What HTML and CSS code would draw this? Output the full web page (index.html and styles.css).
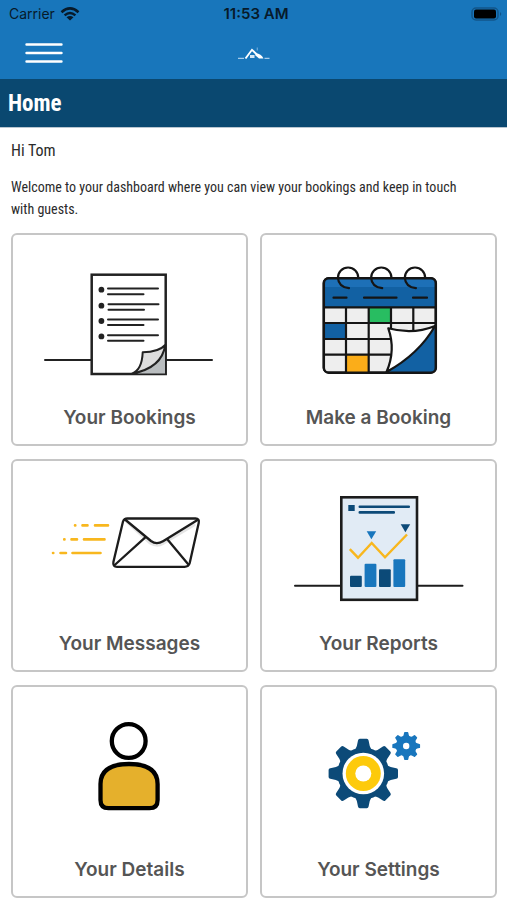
FILE: index.html
```html
<!DOCTYPE html>
<html lang="en">
<head>
<meta charset="utf-8">
<meta name="viewport" content="width=device-width, initial-scale=1">
<title>Home</title>
<link rel="stylesheet" href="styles.css">
</head>
<body>
<header class="top">
  <div class="status">
    <span class="carrier">Carrier
      <svg width="20" height="14" viewBox="0 0 20 14" fill="none" stroke="#071a2a" stroke-width="2.5" aria-hidden="true"><path d="M1.5 5.2Q10-2.4 18.500 5.200M4.600 8.400Q10 3.600 15.400 8.400"/><path d="M10 13.500L6.500 10.300Q10 7.500 13.500 10.300Z" fill="#071a2a" stroke="none"/></svg>
    </span>
    <span class="clock">11:53 AM</span>
    <svg class="battery" width="32" height="14" viewBox="0 0 32 14" aria-hidden="true"><rect x="1" y="1" width="26" height="12" rx="4" fill="none" stroke="#12568a" stroke-width="1.500"/><rect x="3" y="2.500" width="22" height="9" rx="2" fill="#000"/><path d="M29 5q2.500 2 0 4z" fill="#12568a"/></svg>
  </div>
  <nav class="nav">
    <button class="menu" type="button" aria-label="Menu"><svg width="38" height="22" viewBox="0 0 38 22" stroke="#fff" stroke-width="2.400" stroke-linecap="round" aria-hidden="true"><path d="M1.500 2.500h35M1.500 11h35M1.500 19.500h35"/></svg></button>
    <svg class="logo" width="34" height="16" viewBox="0 0 34 16" fill="none" stroke="#fff" aria-hidden="true"><path d="M8.500 13.500L15 4.800L20.500 10" stroke-width="1.900"/><path d="M19 8.500q5 0 7.500 5h-4.500l-4-3.500z" fill="#fff" stroke="none"/><rect x="13" y="10" width="4.500" height="3" fill="#d5e7f5" stroke="none"/><path d="M1 13.300h6M27.500 13.300h5" stroke="#a5cbea" stroke-width="1.200"/><path d="M20.300 2.500v3" stroke="#6aa9dc" stroke-width="1.200"/></svg>
  </nav>
</header>
<h1 class="title">Home</h1>
<main class="page">
  <p class="hi">Hi Tom</p>
  <p class="intro">Welcome to your dashboard where you can view your bookings and keep in touch with guests.</p>
  <div class="cards">
    <a class="card" href="#bookings">
      <svg class="art" viewBox="30 245 200 150" fill="none" stroke="#222" stroke-width="2" stroke-linecap="round" aria-hidden="true">
        <path d="M45 360H212"/>
        <rect x="91.700" y="274.700" width="74" height="99.300" fill="#fff" stroke-width="2.500" stroke-linejoin="miter"/>
        <path d="M165 346V373.500H137Q160 368 165 346Z" fill="#b9bdbf" stroke="none"/>
        <path d="M132 373.600Q142 370 142.700 352.300Q159 352 165.200 345Q162 368 132 373.600Z" fill="#dedede" stroke-linejoin="round"/>
        <g fill="#222" stroke="none"><circle cx="101.400" cy="289.700" r="2.900"/><circle cx="101.400" cy="305.700" r="2.900"/><circle cx="101.400" cy="321" r="2.900"/><circle cx="101.400" cy="336.400" r="2.900"/></g>
        <path d="M108 288.500h50M108 294.200h35.500M108.500 304.300h50M108.500 309.800h35.500M108 319.500h50M108 325h35.500M108 335.200h50M108 340.700h35.500"/>
      </svg>
      <span class="label">Your Bookings</span>
    </a>
    <a class="card" href="#new-booking">
      <svg class="art" viewBox="279 245 200 150" fill="none" stroke="#151515" stroke-width="2.200" stroke-linecap="round" stroke-linejoin="round" aria-hidden="true">
        <rect x="323.800" y="278.200" width="112" height="94.500" rx="5" fill="#eee"/>
        <path d="M324 307V283q0-5 5-5h102q5 0 5 5v24z" fill="#1261a3" stroke="none"/>
        <path d="M325 287v-4q0-4 4-4h102q4 0 4 4v4z" fill="#1d70b7" stroke="none"/>
        <path d="M368.700 307.300h22.300V323h-22.300z" fill="#28bd61" stroke="none"/>
        <path d="M324 323h22v16h-22z" fill="#1261a3" stroke="none"/>
        <path d="M346 354.700h22.700v18H346z" fill="#fbad19" stroke="none"/>
        <path d="M324 307.300h112M324 323h112M324 339h68M324 354.700h66M346 307.300v65.400M368.700 307.300v65.400M391 307.300v24M413.300 307.300v24"/>
        <path d="M435.800 326V368q0 4.700-5 4.700H387Z" fill="#1261a3" stroke="none"/>
        <path d="M388.300 328.300Q413 335 435 326Q419 354 386.500 372Q396 350 388.300 328.300Z" fill="#fff"/>
        <rect x="323.800" y="278.200" width="112" height="94.500" rx="5" stroke-width="2.500"/>
        <path d="M358.300 277.700A10.200 10.200 0 0 0 337.900 277.700Q338.500 287 349 288.200M391.500 277.700A10.200 10.200 0 0 0 371.100 277.700Q371.700 287 382.200 288.200M425.200 277.700A10.200 10.200 0 0 0 404.800 277.700Q405.400 287 415.900 288.200M333.500 297.700h13M364 297.700h32.500M413 297.700h14"/>
      </svg>
      <span class="label">Make a Booking</span>
    </a>
    <a class="card" href="#messages">
      <svg class="art" viewBox="30 471 200 150" fill="none" stroke="#1c1c1c" stroke-width="2.300" stroke-linecap="round" stroke-linejoin="round" aria-hidden="true">
        <path d="M127 522L150 543Q157 547 163 543.500L194 525" stroke="#e5e5e5" stroke-width="3"/>
        <path d="M127.500 518.500H195.500Q199.700 518.500 198.700 523L189.700 563Q188.700 566.800 184.500 566.800H117Q112.600 566.800 113.400 562L123 521.500Q124 518.500 127.500 518.500Z"/>
        <path d="M125 519.500L151 541Q156.500 545.200 163 541.200L197.500 520M145 537.700L114.700 565M167.300 539.300L188 564"/>
        <path stroke="#f8b71e" stroke-width="2.600" d="M75 525.400h.3M82.500 525.400h5M95 525.400h13M64.200 539.400h.3M71.500 539.400h5.500M84 539.400h20.500M53 553h.3M60.500 553h5.500M72.500 553h28"/>
      </svg>
      <span class="label">Your Messages</span>
    </a>
    <a class="card" href="#reports">
      <svg class="art" viewBox="279 471 200 150" fill="none" stroke="#1c1c1c" stroke-width="2" stroke-linecap="round" aria-hidden="true">
        <path d="M295 585.700H462.500"/>
        <rect x="341.300" y="497.300" width="75.700" height="102.500" fill="#e1ebf5" stroke-width="2.600"/>
        <g stroke="none" fill="#0c4a78"><path d="M348.300 505h6.400v6h-6.400z"/><path d="M400.700 524.300h9.500l-4.800 8z"/><rect x="350" y="575.700" width="11.800" height="11.400" rx="1"/><rect x="379" y="569.300" width="11.800" height="17.800" rx="1"/></g>
        <g stroke="none" fill="#1876bd"><path d="M366.700 531.300h9.500l-4.800 8z"/><rect x="364.600" y="563.700" width="11.800" height="23.400" rx="1"/><rect x="393.400" y="559.300" width="11.800" height="27.800" rx="1"/></g>
        <path stroke="#0c4a78" stroke-width="2.600" d="M359.800 506.700h49M359.800 512.400h34"/>
        <path stroke="#f8b71e" stroke-width="2.400" stroke-linecap="butt" d="M349.800 549.200L358 557.700L371.700 543L385 557.300L407 534.500"/>
      </svg>
      <span class="label">Your Reports</span>
    </a>
    <a class="card" href="#details">
      <svg class="art" viewBox="30 697 200 150" fill="none" stroke="#000" stroke-width="4.300" aria-hidden="true">
        <circle cx="128.700" cy="741" r="16.900"/>
        <path d="M100.500 784Q100.500 764 129 764Q157.600 764 157.600 784V800Q157.600 808.200 149.500 808.200H108.500Q100.500 808.200 100.500 800Z" fill="#e5b02c"/>
      </svg>
      <span class="label">Your Details</span>
    </a>
    <a class="card" href="#settings">
      <svg class="art" viewBox="279 697 200 150" aria-hidden="true">
        <defs>
          <path id="tooth" d="M-8.500-23Q-6-27-5.300-33Q-5-34.700-3.500-34.700H3.500Q5-34.700 5.300-33Q6-27 8.500-23Z"/>
          <g id="gear"><circle r="26"/><use href="#tooth"/><use href="#tooth" transform="rotate(45)"/><use href="#tooth" transform="rotate(90)"/><use href="#tooth" transform="rotate(135)"/><use href="#tooth" transform="rotate(180)"/><use href="#tooth" transform="rotate(225)"/><use href="#tooth" transform="rotate(270)"/><use href="#tooth" transform="rotate(315)"/></g>
        </defs>
        <g transform="translate(363.300 773.500)"><use href="#gear" fill="#0c4a78"/><circle r="20.800" fill="#fff"/><circle r="17.500" fill="#fdca0b"/><circle r="8" fill="#fff"/></g>
        <g transform="translate(406.200 746)"><use href="#gear" fill="#1876bd" transform="scale(.4)"/><circle r="3.200" fill="#fff"/></g>
      </svg>
      <span class="label">Your Settings</span>
    </a>
  </div>
</main>
</body>
</html>
```
FILE: styles.css
```css
* { box-sizing: border-box; }
body {
  margin: 0;
  background: #fff;
  color: #2b2b2b;
  font-family: Inter, "Liberation Sans", sans-serif;
}
.top { background: #1876bb; }
.status {
  display: grid;
  grid-template-columns: 1fr auto 1fr;
  align-items: center;
  padding: 0 4px 0 9px;
  font-size: 14px;
  line-height: 27px;
  color: #071a2a;
}
.carrier { display: flex; align-items: center; gap: 5px; }
.clock { font-size: 15px; font-weight: 600; }
.battery { justify-self: end; }
.nav {
  display: grid;
  grid-template-columns: 1fr auto 1fr;
  align-items: center;
  padding: 15px 25px;
}
.menu {
  display: flex;
  justify-self: start;
  padding: 0;
  border: 0;
  background: none;
}
.title {
  margin: 0;
  padding: 2px 8px 0;
  border-bottom: 1px solid #b9c6d0;
  background: #0a4870;
  color: #fff;
  font: bold 23px/46px "Roboto Condensed", "Liberation Sans Narrow", "Liberation Sans", sans-serif;
}
.page {
  padding: 12px 10px 2px 11px;
}
.hi, .intro {
  margin: 0;
  font-family: "Roboto Condensed", "Liberation Sans Narrow", "Liberation Sans", sans-serif;
}
.hi { font-size: 16px; line-height: 22px; }
.intro {
  margin: 14px 0 13px;
  padding-right: 24px;
  font-size: 14px;
  line-height: 22px;
}
.cards {
  display: grid;
  grid-template-columns: 1fr 1fr;
  gap: 13px 12px;
}
.card {
  display: flex;
  flex-direction: column;
  align-items: center;
  padding: 10px 0 3px;
  border: 2px solid #c6c6c6;
  border-radius: 6px;
  color: #555;
  text-decoration: none;
}
.art { display: block; width: 200px; max-width: 100%; }
.label { font-size: 19px; line-height: 46px; font-weight: 600; }
```
